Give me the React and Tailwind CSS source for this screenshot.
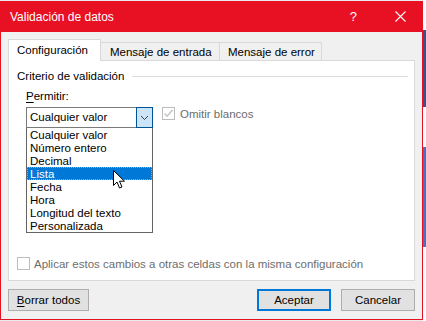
import React from "react";

const font = { fontFamily: '"Liberation Sans", Arial, sans-serif' };

function Check({ color = "#bcbcbc" }) {
  return (
    <svg width="11" height="11" viewBox="0 0 11 11" className="block">
      <path d="M1.5 5.5 L4.2 8.2 L9.5 2" fill="none" stroke={color} strokeWidth="1.2" />
    </svg>
  );
}

function Cursor() {
  return (
    <svg width="13" height="20" viewBox="0 0 13 20" className="block">
      <path
        d="M0.5 0.5 L0.5 15.5 L4 12 L6.5 18 L9 17 L6.5 11.2 L11.5 11.2 Z"
        fill="#ffffff"
        stroke="#000000"
        strokeWidth="1"
        strokeLinejoin="miter"
      />
    </svg>
  );
}

export default function App() {
  const items = [
    "Cualquier valor",
    "Número entero",
    "Decimal",
    "Lista",
    "Fecha",
    "Hora",
    "Longitud del texto",
    "Personalizada",
  ];
  return (
    <div className="w-[426px] h-[321px] bg-[#e9e9e9] flex overflow-hidden text-[11.5px] leading-[14px] text-black" style={font}>
      <div className="w-[423px] h-[320px] pt-[1px] flex flex-col">
        <div className="w-[423px] h-[319px] bg-[#f0f0f0] border border-[#e81123] border-t-0 flex flex-col">
          {/* Title bar */}
          <div className="h-[31px] bg-[#e81123] flex items-center text-white -mx-[1px] pl-[10px]">
            <span className="text-[12px] mt-[1px]">Validación de datos</span>
            <span className="ml-auto mr-[38px] text-[13px] mt-[1px]">?</span>
            <svg width="11" height="11" viewBox="0 0 11 11" className="mr-[17px]">
              <path d="M0.5 0.5 L10.5 10.5 M10.5 0.5 L0.5 10.5" stroke="#ffffff" strokeWidth="1.1" />
            </svg>
          </div>
          {/* Body */}
          <div className="flex flex-col px-[7px] pt-[7px]">
            {/* Tabs */}
            <div className="flex items-end h-[22px] relative z-10">
              <div className="h-[22px] w-[93px] bg-white border border-[#d9d9d9] border-b-0 flex items-center pl-[8px] pb-[1px]">
                Configuración
              </div>
              <div className="h-[19px] w-[119px] border border-[#d9d9d9] border-l-0 border-b-0 flex items-center pl-[9px] pb-[1px]">
                Mensaje de entrada
              </div>
              <div className="h-[19px] w-[102px] border border-[#d9d9d9] border-l-0 border-b-0 flex items-center pl-[8px] pb-[1px]">
                Mensaje de error
              </div>
            </div>
            {/* Panel */}
            <div className="h-[221px] w-[407px] -mt-[1px] bg-white border border-[#d9d9d9] flex flex-col pl-[8px] pr-[6px] pb-[10px]">
              <div className="mt-[8px] h-[14px] flex items-center">
                <span>Criterio de validación</span>
                <div className="flex-1 h-px bg-[#dcdcdc] ml-[8px]" />
              </div>
              <div className="pl-[9px] mt-[6px] h-[14px] flex items-center">
                <span>
                  <span className="underline underline-offset-[2px]">P</span>ermitir:
                </span>
              </div>
              <div className="pl-[9px] mt-[4px] flex items-start">
                <div className="w-[127px] flex flex-col">
                  {/* Combo */}
                  <div className="h-[21px] border border-[#7a7a7a] flex items-stretch">
                    <div className="flex-1 flex items-center pl-[3px] pb-[1px]">Cualquier valor</div>
                    <div className="w-[17px] bg-[#cce4f7] border border-[#005499] -my-[1px] -mr-[1px] flex items-center justify-center">
                      <svg width="9" height="6" viewBox="0 0 9 6">
                        <path d="M1 1 L4.5 4.5 L8 1" fill="none" stroke="#404040" strokeWidth="1" />
                      </svg>
                    </div>
                  </div>
                  {/* List */}
                  <div className="relative border border-[#646464] border-t-0 flex flex-col">
                    {items.map((it) =>
                      it === "Lista" ? (
                        <div
                          key={it}
                          className="h-[13px] bg-[#0078d7] text-white border border-dotted border-[#d2a060] flex items-center pl-[2px] leading-[12px]"
                        >
                          {it}
                        </div>
                      ) : (
                        <div key={it} className="h-[13px] flex items-center pl-[3px] leading-[12px]">
                          {it}
                        </div>
                      )
                    )}
                    <div className="absolute left-[86px] top-[42px]">
                      <Cursor />
                    </div>
                  </div>
                </div>
                <div className="ml-[9px] flex items-center h-[13px]">
                  <div className="w-[13px] h-[13px] border border-[#bcbcbc] bg-white flex items-center justify-center">
                    <Check />
                  </div>
                  <span className="ml-[5px] text-[#6d6d6d]">Omitir blancos</span>
                </div>
              </div>
              <div className="mt-auto flex items-center h-[13px]">
                <div className="w-[13px] h-[13px] border border-[#bcbcbc] bg-white" />
                <span className="ml-[4px] text-[#6d6d6d]">Aplicar estos cambios a otras celdas con la misma configuración</span>
              </div>
            </div>
            {/* Buttons */}
            <div className="mt-[8px] flex items-center">
              <div className="w-[81px] h-[22px] bg-[#e1e1e1] border border-[#adadad] flex items-center justify-center pb-[1px]">
                <span>
                  <span className="underline underline-offset-[2px]">B</span>orrar todos
                </span>
              </div>
              <div className="ml-auto w-[74px] h-[22px] bg-[#e1e1e1] border-2 border-[#0078d7] flex items-center justify-center pb-[1px]">
                Aceptar
              </div>
              <div className="ml-[10px] w-[74px] h-[22px] bg-[#e1e1e1] border border-[#adadad] flex items-center justify-center pb-[1px]">
                Cancelar
              </div>
            </div>
          </div>
        </div>
      </div>
      {/* background strip */}
      <div className="w-[3px] h-[321px] bg-white flex flex-col">
        <div className="h-[30px]" />
        <div className="h-[77px] bg-[#2f5597]" />
        <div className="h-[40px]" />
        <div className="h-[100px] bg-[#4472c4]" />
      </div>
    </div>
  );
}
